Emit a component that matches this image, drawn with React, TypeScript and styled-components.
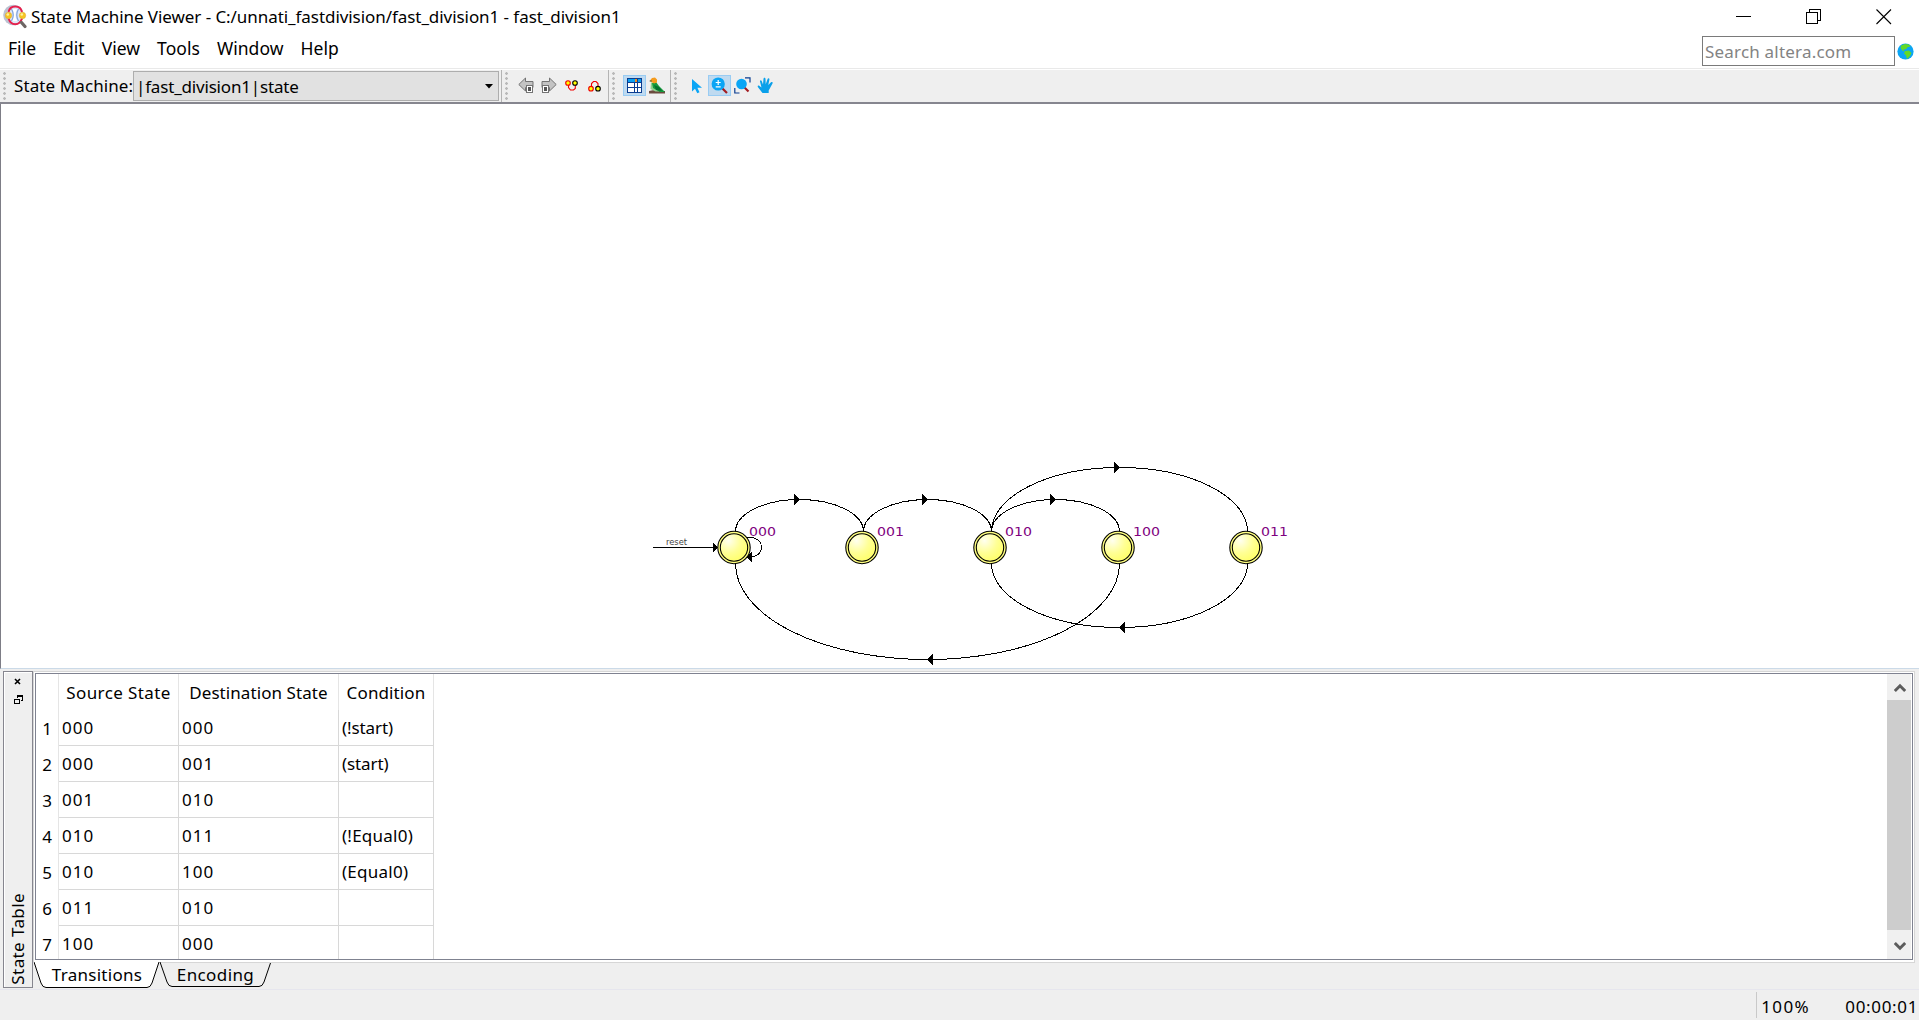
import React from "react";
import styled, { createGlobalStyle, css } from "styled-components";

const Global = createGlobalStyle`
  * { box-sizing: border-box; }
  html, body { margin: 0; padding: 0; overflow: hidden; background: #efefef; }
  body { font-family: "Noto Sans", "Open Sans", sans-serif; font-size: 17px; color: #000; }
`;

const Window = styled.div`
  width: 1919px;
  height: 1020px;
  display: flex;
  flex-direction: column;
  background: #efefef;
  white-space: pre;
`;

const Label = styled.span<{ $size?: number; $ls?: number }>`
  font-size: ${(p) => p.$size ?? 17}px;
  letter-spacing: ${(p) => p.$ls ?? 0}px;
  line-height: 24px;
`;

const TitleBar = styled.header`
  height: 34px;
  background: #fff;
  display: flex;
  align-items: flex-start;
  padding: 4px 27px 0 3px;
`;

const AppTitle = styled.div`
  flex: 1;
  display: flex;
  gap: 4px;
  padding-top: 1px;

  svg { margin-top: -1px; }
`;

const WindowControls = styled.div`
  display: flex;
  gap: 54px;
  padding-top: 5px;
`;

const MenuBar = styled.nav`
  height: 34px;
  background: #fff;
  display: flex;
  justify-content: space-between;
  padding: 2px 5px 0 8px;
`;

const MenuItems = styled.div`
  display: flex;
  gap: 17px;
`;

const SearchArea = styled.div`
  display: flex;
  align-items: flex-start;
  gap: 2px;

  svg { margin-top: 7px; }
`;

const SearchBox = styled.div`
  width: 193px;
  height: 30px;
  border: 1px solid #7a7a7a;
  color: #838383;
  padding: 3px 2px;
`;

const ToolBar = styled.div`
  height: 36px;
  display: flex;
  border-top: 1px solid #e9e9e9;
  border-bottom: 2px solid #86868f;
  box-shadow: inset 0 1px 0 #fff;
  padding-top: 1px;
`;

const ToolGroup = styled.div<{ $width?: number }>`
  width: ${(p) => (p.$width ? `${p.$width}px` : "auto")};
  display: flex;
  align-items: flex-start;
  ${(p) =>
    p.$width &&
    css`
      border-right: 1px solid #b4b4b4;
    `}
`;

const Grip = styled.div`
  width: 3px;
  height: 28px;
  margin: 2px 0 0 3px;
  background: radial-gradient(circle at 1.5px 1.5px, #b9b9b9 1.2px, transparent 1.5px) 0 0 / 3px 5px;
`;

const MachineLabel = styled.div`
  width: 127px;
  padding: 4px 0 0 8px;
`;

const Combo = styled.div`
  width: 366px;
  height: 30px;
  margin-top: 1px;
  border: 1px solid #adadad;
  background: #e1e1e1;
  display: flex;
  align-items: center;
  justify-content: space-between;
  padding: 1px 5px 0 2px;
`;

const ToolButton = styled.div<{ $active?: boolean; $ml?: number }>`
  width: 23px;
  height: 21px;
  margin: 5px 0 0 ${(p) => p.$ml ?? 0}px;
  display: flex;
  align-items: center;
  justify-content: center;
  flex: none;
  border: 1px solid ${(p) => (p.$active ? "#99ccf3" : "transparent")};
  background: ${(p) => (p.$active ? "#bfdaf0" : "transparent")};
`;

const Canvas = styled.main`
  height: 565px;
  background: #fff;
  border-left: 1px solid #7d7d86;
  border-bottom: 1px solid #cbdae8;

  svg { display: block; }
`;

const Dock = styled.section`
  height: 321px;
  display: flex;
  padding: 2px 4px 0 3px;
  border-bottom: 1px solid #e6e6ee;
`;

const DockTitle = styled.div`
  width: 30px;
  height: 317px;
  border: 1px solid #86868f;
  box-shadow: inset 1px 1px 0 #fff;
  display: flex;
  flex-direction: column;
  align-items: center;
  justify-content: space-between;
  padding: 6px 0 2px;
`;

const DockButtons = styled.div`
  display: flex;
  flex-direction: column;
  align-items: center;
  gap: 10px;
`;

const DockName = styled.div`
  writing-mode: vertical-rl;
  transform: rotate(180deg);
  line-height: 24px;
  letter-spacing: 0.4px;
`;

const DockBody = styled.div`
  flex: 1;
  display: flex;
  flex-direction: column;
`;

const Frame = styled.div`
  height: 292px;
  border: 1px solid #d6d6d6;
  background: #fff;
  padding: 1px;
`;

const TableView = styled.div`
  height: 287px;
  border: 1px solid #7f8290;
  background: #fff;
  display: flex;
  justify-content: space-between;
  overflow: hidden;
  padding-right: 1px;
`;

const Grid = styled.div`
  display: grid;
  grid-template-columns: 23px 120px 160px 95px;
  grid-template-rows: 36px repeat(7, 36px);
`;

const Cell = styled.div<{ $head?: boolean; $num?: boolean; $ls?: number }>`
  border-right: 1px solid ${(p) => (p.$head || p.$num ? "#e5e5e5" : "#d8d8d8")};
  border-bottom: ${(p) => (p.$head || p.$num ? "0" : "1px solid #d8d8d8")};
  padding: ${(p) => (p.$num ? "7px 6px 0 0" : p.$head ? "7px 0 0 0" : "6px 0 0 3px")};
  text-align: ${(p) => (p.$head ? "center" : p.$num ? "right" : "left")};
  letter-spacing: ${(p) => p.$ls ?? 0}px;
  line-height: 24px;
`;

const ScrollBar = styled.div`
  width: 24px;
  background: #f0f0f0;
  display: flex;
  flex-direction: column;
`;

const ScrollButton = styled.div<{ $drop?: number }>`
  height: 26px;
  display: flex;
  align-items: center;
  justify-content: center;
  padding: ${(p) => p.$drop ?? 2}px 0 0 1px;
`;

const Thumb = styled.div`
  height: 230px;
  background: #cdcdcd;
`;

const Tabs = styled.div`
  display: flex;
  padding-left: 1px;
`;

const Tab = styled.div<{ $width: number }>`
  position: relative;
  width: ${(p) => p.$width}px;
  height: 26px;
  display: flex;
  justify-content: center;

  svg { position: absolute; left: 0; top: -1px; }
  span { position: relative; }
`;

const StatusBar = styled.footer`
  flex: 1;
  display: flex;
  justify-content: flex-end;
  padding: 2px 1px 0 0;
`;

const Zoom = styled.div`
  width: 89px;
  height: 26px;
  border-left: 1px solid #c9c9c9;
  padding: 3px 0 0 4px;
`;

const Elapsed = styled.div`
  padding-top: 3px;
`;

const AppIcon = () => (
  <svg width="24" height="25" viewBox="0 0 24 25">
    <circle cx="10.500" cy="11" r="10.300" fill="#bcc2d2" />
    <circle cx="12" cy="11" r="8.500" fill="#dfe8f8" />
    <path d="M9 5q3 6 0 12h5q-3-6 0-12z" fill="#fff" />
    <path d="M8.500 5q3.500 6 0 12M15.500 5q-3.500 6 0 12" stroke="#7fa3dc" strokeWidth="1.200" fill="none" />
    <path d="M5.500 8C7 .5 17.500 .5 19 8M5.500 14.500c2.500 7.500 11 7.500 13.500 0" stroke="#e5214d" strokeWidth="2" fill="none" />
    <path d="M18.500 18.500l3.500 4" stroke="#6d6664" strokeWidth="3.200" strokeLinecap="round" />
    <circle cx="5.500" cy="11.500" r="3.200" fill="#f7c522" stroke="#d8a630" strokeWidth=".5" />
    <circle cx="19.500" cy="11.500" r="3.200" fill="#f7c522" stroke="#d8a630" strokeWidth=".5" />
    <circle cx="4.800" cy="10.500" r="1.300" fill="#fff0a0" />
    <circle cx="18.800" cy="10.500" r="1.300" fill="#fff0a0" />
  </svg>
);

const MinimizeIcon = () => (
  <svg width="16" height="16" shapeRendering="crispEdges">
    <path d="M0 7.500h15" stroke="#000" />
  </svg>
);
const RestoreIcon = () => (
  <svg width="16" height="16" shapeRendering="crispEdges">
    <path d="M.5 3.500h11v11h-11zM3.500 3.500v-3h11v11h-3" stroke="#000" fill="none" />
  </svg>
);
const CloseIcon = () => (
  <svg width="16" height="16">
    <path d="M.5.5l14.500 14.500M15 .5L.5 15" stroke="#000" strokeWidth="1.100" />
  </svg>
);
const GlobeIcon = () => (
  <svg width="17" height="17">
    <circle cx="8.500" cy="8.500" r="8.100" fill="#0aa5f5" />
    <path d="M4 2.500L8 1l4 .6 1.500 2-3 .6-1.500 2-2.500.3.800 2-2-1L3.500 5zM8 8l4-.5 2.500 2.500-1.500 3-3 3-1-3.500L7 10.500z" fill="#62d928" />
  </svg>
);
const ArrowDoc = ({ flip }: { flip?: boolean }) => (
  <svg width="16" height="17">
    <path
      d="M.8 7.500L7.500 1v3.500h7.500v6H7.500V14z"
      transform={flip ? "matrix(-1 0 0 1 16 0)" : undefined}
      fill="#c3c3c3"
      stroke="#737373"
    />
    <g transform={flip ? "translate(-7 0)" : undefined} shapeRendering="crispEdges">
      <path d="M8.500 8.500h6v7h-6z" fill="#fff" stroke="#737373" />
      <path d="M10 10h3v4h-3z" fill="#555" />
    </g>
  </svg>
);
const FanIn = () => (
  <svg width="14" height="12">
    <path d="M3.500 5v2.500l2 2.500h3l1.800-1.500V5" fill="none" stroke="#f00000" strokeWidth="1.100" />
    <circle cx="3" cy="3" r="2.300" fill="#ff0" stroke="#f00000" strokeWidth="1.100" />
    <circle cx="10" cy="3" r="2.300" fill="#ff0" stroke="#000" strokeWidth="1.100" />
  </svg>
);
const FanOut = () => (
  <svg width="14" height="12">
    <path d="M3.500 7V3.500l2-2h2.500l2 2V7" fill="none" stroke="#f00000" strokeWidth="1.100" />
    <circle cx="3" cy="8.700" r="2.300" fill="#ff0" stroke="#f00000" strokeWidth="1.100" />
    <circle cx="10" cy="8.700" r="2.300" fill="#ff0" stroke="#000" strokeWidth="1.100" />
  </svg>
);
const TableIcon = () => (
  <svg width="15" height="15" shapeRendering="crispEdges">
    <path d="M0 0h15v15H0z" fill="#fff" />
    <path d="M1 1h13v3H1z" fill="#0a9ff0" />
    <path d="M8 1h2v3H8z" fill="#f58a1f" />
    <path d="M.5 .5h14v14H.5zM0 4.500h15M0 9.500h15M7.500 4v11M10.500 0v15" fill="none" stroke="#0b3d91" />
  </svg>
);
const BirdIcon = () => (
  <svg width="17" height="17">
    <path d="M0 14l5-1 5 1h6v2.500H0z" fill="#6b4b3e" />
    <path d="M2 5L1.500 12l5 2.500h4z" fill="#8fd08c" />
    <path d="M3 6l4-1 3 4 6 6H11L4 11z" fill="#159a3c" />
    <path d="M5 8l5 2 3 4-6-1z" fill="#067030" />
    <path d="M1 3.500L3 1l3-.5 2 2v3L5 6.500 2.500 5z" fill="#f59b1c" />
    <path d="M0 4l2.500-1v2z" fill="#5b5b3a" />
  </svg>
);
const CursorIcon = () => (
  <svg width="12" height="16">
    <path d="M1 1v12.500l3-2.800 2.300 4.600 2.200-1-2.100-4.500H11z" fill="#0aa5f5" />
  </svg>
);
const ZoomIcon = () => (
  <svg width="17" height="17">
    <path d="M10.500 10.500l5.500 5.500" stroke="#a31d22" strokeWidth="2.200" />
    <circle cx="7.200" cy="7" r="6.600" fill="#0aa5f5" />
    <path d="M7.200 3v5M4.700 5.500h5M4.700 9.800h5" stroke="#fff" strokeWidth="1.200" />
  </svg>
);
const FitIcon = () => (
  <svg width="17" height="17">
    <path d="M10.500 10.500l4 4" stroke="#a31d22" strokeWidth="2.200" />
    <circle cx="7.500" cy="7" r="5.300" fill="#0aa5f5" />
    <path d="M11 .8h5v4.700M.8 11v5h4.700" fill="none" stroke="#0b3d91" strokeWidth="1.200" />
  </svg>
);
const HandIcon = () => (
  <svg width="17" height="17">
    <path
      d="M5.500 16L1 10.200c-1-1.500.5-2 1.500-1.200L4.500 10.500 3 4.500c-.3-1.500 1.300-1.800 1.700-.5L6 7.500 6.500 1.800c.1-1.500 1.900-1.500 2 0L8.700 7.300 10.600 2c.5-1.300 2.100-.8 1.800.5L11.300 8 14 5.300c1-1 2.300 0 1.500 1.200l-3.800 7V16z"
      fill="#0aa0ea"
    />
  </svg>
);
const DockClose = () => (
  <svg width="8" height="7">
    <path d="M1 1l5 5M6 1L1 6" stroke="#000" strokeWidth="1.600" />
  </svg>
);
const DockFloat = () => (
  <svg width="9" height="9" shapeRendering="crispEdges">
    <path d="M.5 4h5v4.500h-5zM0 4.500h6M3.500 3V.5h5V5.500H7M3 1.500h6" stroke="#000" fill="none" />
  </svg>
);
const Chevron = ({ down }: { down?: boolean }) => (
  <svg width="12" height="10">
    <path
      d={down ? "M.8 2l5.200 5.200L11.200 2" : "M.8 8L6 2.800 11.200 8"}
      fill="none"
      stroke="#5c5c5c"
      strokeWidth="3"
    />
  </svg>
);

const STATES = ["000", "001", "010", "100", "011"];
const NODE_Y = 443.5;
const nodeX = (i: number) => 733 + i * 128;

const EDGES = [
  { from: 0, to: 1, ry: 32, side: -1 },
  { from: 1, to: 2, ry: 32, side: -1 },
  { from: 2, to: 3, ry: 32, side: -1 },
  { from: 2, to: 4, ry: 64, side: -1 },
  { from: 4, to: 2, ry: 64, side: 1 },
  { from: 3, to: 0, ry: 96, side: 1 },
];

const Diagram = () => (
  <svg width="1918" height="564" viewBox="0 0 1918 564">
    <defs>
      <radialGradient id="ball" cx=".3" cy=".25" r=".75">
        <stop offset="0" stopColor="#fffff0" />
        <stop offset=".6" stopColor="#ffff96" />
        <stop offset="1" stopColor="#ffff70" />
      </radialGradient>
    </defs>
    <g shapeRendering="crispEdges" fill="none" stroke="#000">
      {EDGES.map((e) => {
        const a = nodeX(e.from) + 1.5;
        const b = nodeX(e.to) + 1.5;
        const y = NODE_Y + e.side * 16;
        const dir = b > a ? 1 : -1;
        const tip = (a + b) / 2 + (dir > 0 ? 0.5 : -1);
        const top = y + e.side * e.ry;
        return (
          <g key={`${e.from}-${e.to}`}>
            <path d={`M${a} ${y}A${Math.abs(b - a) / 2} ${e.ry} 0 0 1 ${b} ${y}`} />
            <path d={`M${tip} ${top}l${-6 * dir} -5.500v11z`} fill="#000" stroke="none" />
          </g>
        );
      })}
      <path d={`M652 ${NODE_Y}h65`} />
      <path d={`M717.500 ${NODE_Y}l-6-5.500v11z`} fill="#000" stroke="none" />
      <path d="M746 433.500h5c6 1 9.500 5 9.500 10s-4 9-10.500 9.500" />
      <path d="M745 453l6-5v10z" fill="#000" stroke="none" />
    </g>
    {STATES.map((s, i) => (
      <g key={s}>
        <circle cx={nodeX(i)} cy={NODE_Y} r="16.200" fill="#ffff80" stroke="#000" strokeWidth="1.100" />
        <circle cx={nodeX(i)} cy={NODE_Y} r="13.700" fill="url(#ball)" stroke="#000" strokeWidth="1.100" />
        <text x={nodeX(i) + 15} y="432" fontFamily="DejaVu Sans, sans-serif" fontSize="12.500" fill="#800080" textLength="27" lengthAdjust="spacingAndGlyphs">
          {s}
        </text>
      </g>
    ))}
    <text x="665" y="440.500" fontFamily="DejaVu Sans, sans-serif" fontSize="8" fill="#444" textLength="21" lengthAdjust="spacingAndGlyphs">
      reset
    </text>
  </svg>
);

const MENUS = ["File", "Edit", "View", "Tools", "Window", "Help"];
const HEADERS = [
  { text: "Source State", ls: 0.38 },
  { text: "Destination State", ls: 0.08 },
  { text: "Condition", ls: 0.12 },
];
const ROWS = [
  ["000", "000", "(!start)"],
  ["000", "001", "(start)"],
  ["001", "010", ""],
  ["010", "011", "(!Equal0)"],
  ["010", "100", "(Equal0)"],
  ["011", "010", ""],
  ["100", "000", ""],
];

const cellSpacing = (text: string) =>
  /^\d+$/.test(text) ? 1.05 : text.includes("Equal") ? 0.25 : -0.1;

export default function App() {
  return (
    <Window>
      <Global />
      <TitleBar>
        <AppTitle>
          <AppIcon />
          <Label $ls={-0.06}>State Machine Viewer - C:/unnati_fastdivision/fast_division1 - fast_division1</Label>
        </AppTitle>
        <WindowControls>
          <MinimizeIcon />
          <RestoreIcon />
          <CloseIcon />
        </WindowControls>
      </TitleBar>
      <MenuBar>
        <MenuItems>
          {MENUS.map((m) => (
            <Label key={m} $size={17.5} $ls={0.04}>{m}</Label>
          ))}
        </MenuItems>
        <SearchArea>
          <SearchBox>
            <Label $ls={0.2}>Search altera.com</Label>
          </SearchBox>
          <GlobeIcon />
        </SearchArea>
      </MenuBar>
      <ToolBar>
        <ToolGroup $width={502}>
          <Grip />
          <MachineLabel>
            <Label $ls={0.1}>State Machine:</Label>
          </MachineLabel>
          <Combo>
            <Label $ls={-0.18}>|fast_division1|state</Label>
            <svg width="8" height="5">
              <path d="M0 0h8L4 4.500z" />
            </svg>
          </Combo>
        </ToolGroup>
        <ToolGroup $width={107}>
          <Grip />
          <ToolButton $ml={6}><ArrowDoc /></ToolButton>
          <ToolButton><ArrowDoc flip /></ToolButton>
          <ToolButton><FanIn /></ToolButton>
          <ToolButton><FanOut /></ToolButton>
        </ToolGroup>
        <ToolGroup $width={62}>
          <Grip />
          <ToolButton $active $ml={8}><TableIcon /></ToolButton>
          <ToolButton><BirdIcon /></ToolButton>
        </ToolGroup>
        <ToolGroup>
          <Grip />
          <ToolButton $ml={8}><CursorIcon /></ToolButton>
          <ToolButton $active><ZoomIcon /></ToolButton>
          <ToolButton><FitIcon /></ToolButton>
          <ToolButton><HandIcon /></ToolButton>
        </ToolGroup>
      </ToolBar>
      <Canvas>
        <Diagram />
      </Canvas>
      <Dock>
        <DockTitle>
          <DockButtons>
            <DockClose />
            <DockFloat />
          </DockButtons>
          <DockName>State Table</DockName>
        </DockTitle>
        <DockBody>
          <Frame>
            <TableView>
              <Grid>
                <Cell $num />
                {HEADERS.map((h) => (
                  <Cell key={h.text} $head $ls={h.ls}>{h.text}</Cell>
                ))}
                {ROWS.map((r, i) => (
                  <React.Fragment key={i}>
                    <Cell $num>{i + 1}</Cell>
                    {r.map((c, j) => (
                      <Cell key={j} $ls={cellSpacing(c)}>{c}</Cell>
                    ))}
                  </React.Fragment>
                ))}
              </Grid>
              <ScrollBar>
                <ScrollButton><Chevron /></ScrollButton>
                <Thumb />
                <ScrollButton $drop={5}><Chevron down /></ScrollButton>
              </ScrollBar>
            </TableView>
          </Frame>
          <Tabs>
            <Tab $width={126}>
              <svg width="126" height="26">
                <path d="M0 0L7 21q1.500 4.500 5 4.500h101q3.500 0 5-4.500L125 0" fill="#fff" stroke="#000" />
              </svg>
              <Label $ls={0.28}>Transitions</Label>
            </Tab>
            <Tab $width={111}>
              <svg width="111" height="25">
                <path d="M0 0L7 20q1.500 4.500 5 4.500h87q3.500 0 5-4.500L110.500 1" fill="none" stroke="#000" />
              </svg>
              <Label $ls={0.4}>Encoding</Label>
            </Tab>
          </Tabs>
        </DockBody>
      </Dock>
      <StatusBar>
        <Zoom>
          <Label $ls={1.3}>100%</Label>
        </Zoom>
        <Elapsed>
          <Label $ls={0.65}>00:00:01</Label>
        </Elapsed>
      </StatusBar>
    </Window>
  );
}
